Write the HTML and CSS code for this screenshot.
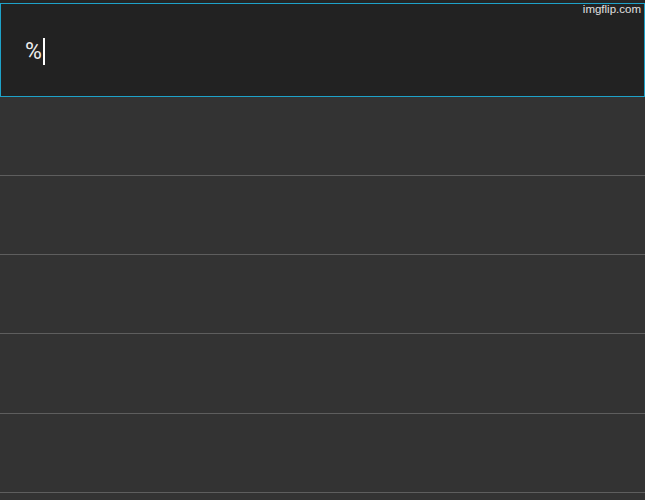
FILE: index.html
```html
<!DOCTYPE html>
<html>
<head>
<meta charset="utf-8">
<link rel="stylesheet" href="styles.css">
</head>
<body>
<div class="screen">
  <div class="top-gap"></div>
  <div class="search">
    <span class="query">%</span><span class="caret"></span>
  </div>
  <div class="list">
    <div class="row"></div>
    <div class="row"></div>
    <div class="row"></div>
    <div class="row tall"></div>
    <div class="row"></div>
  </div>
  <div class="watermark">imgflip.com</div>
</div>
</body>
</html>
```
FILE: styles.css
```css
html, body {
  margin: 0;
  padding: 0;
  background: #333333;
}
.screen {
  position: relative;
  width: 645px;
  height: 500px;
  overflow: hidden;
  background: #333333;
  font-family: Roboto, "Liberation Sans", sans-serif;
}
.top-gap {
  height: 3px;
  background: #252525;
}
.search {
  box-sizing: border-box;
  height: 94px;
  border: 1px solid #1ea2c9;
  background: #222222;
  display: flex;
  align-items: center;
  padding-left: 24px;
  padding-top: 3px;
}
.query {
  color: #ececec;
  font-size: 23px;
  line-height: 27px;
}
.caret {
  display: inline-block;
  width: 2px;
  height: 27px;
  background: #ffffff;
  margin-left: 1px;
}
.list {
  display: flex;
  flex-direction: column;
}
.row {
  height: 78px;
  border-bottom: 1px solid #5e5e5e;
  background: #333333;
}
.row.tall {
  height: 79px;
}
.watermark {
  position: absolute;
  top: 2px;
  right: 4px;
  color: #e0e0e0;
  font-family: "Liberation Sans", Arial, sans-serif;
  font-size: 11.5px;
  line-height: 14px;
}
```
